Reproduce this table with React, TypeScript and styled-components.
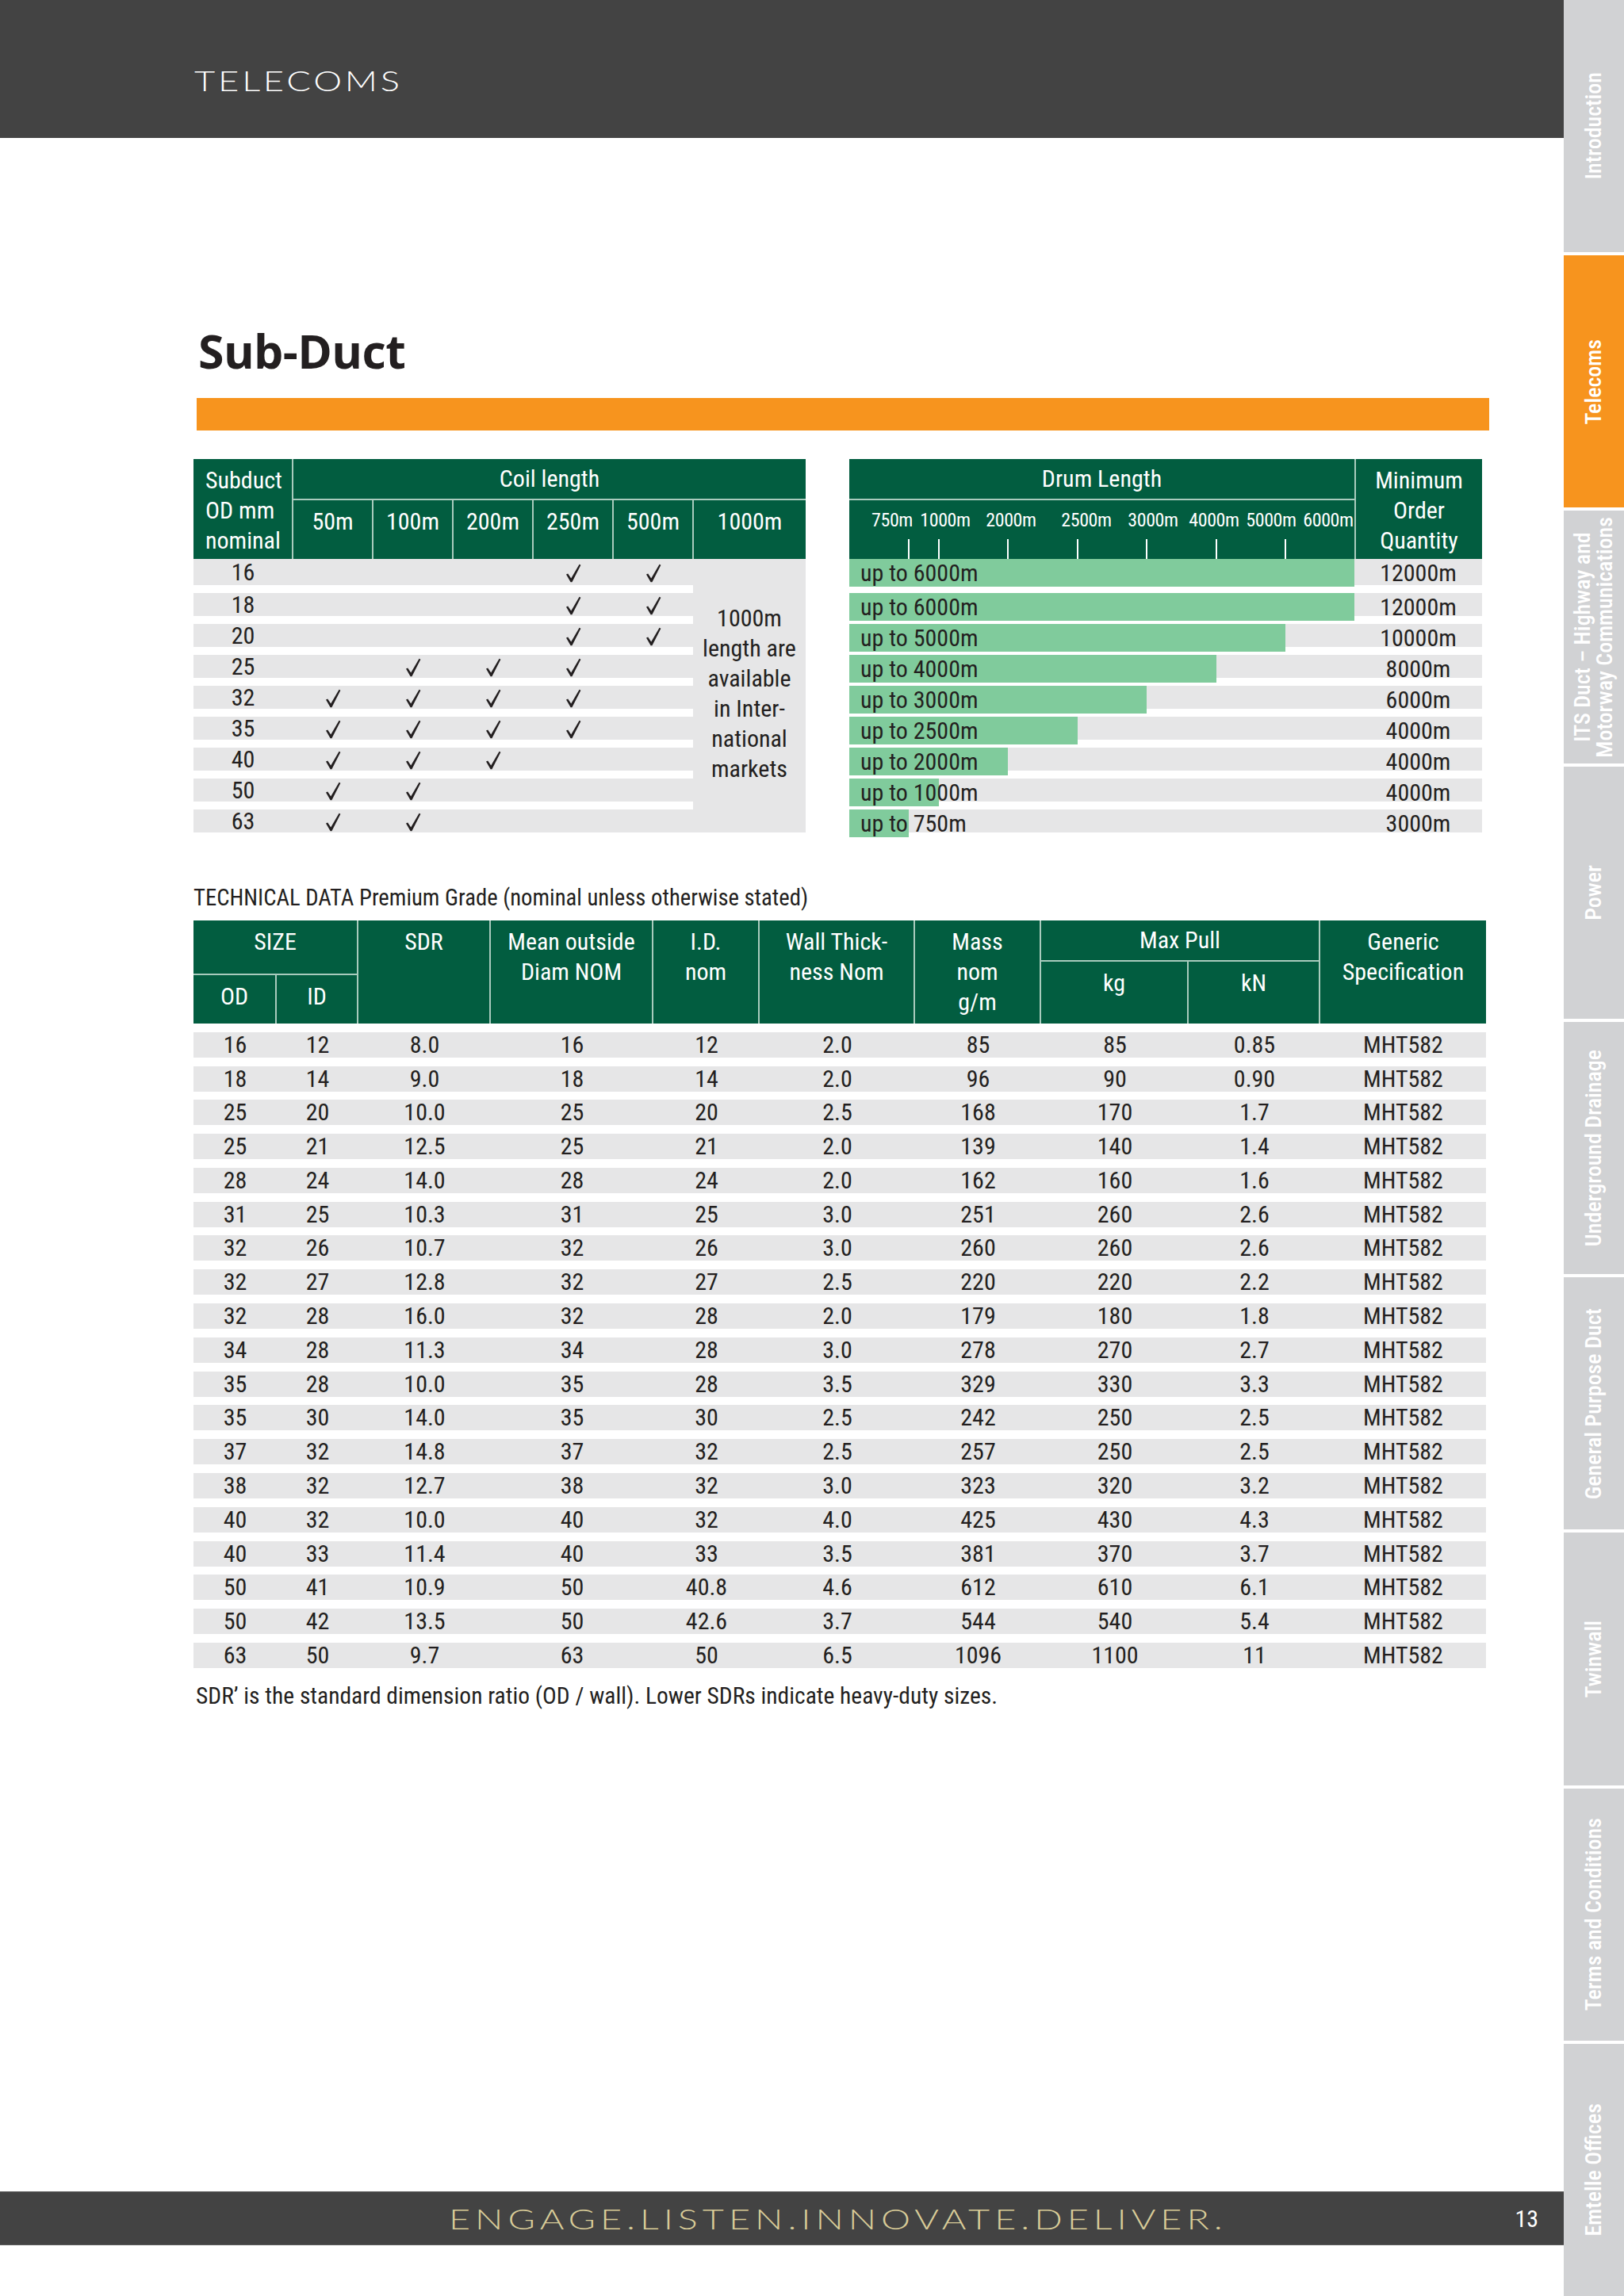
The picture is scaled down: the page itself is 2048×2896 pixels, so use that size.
import React from 'react';
import styled, { createGlobalStyle } from 'styled-components';

const COND = `"Liberation Sans Narrow", "Arial Narrow", "Roboto Condensed", Roboto, sans-serif`;
const GREEN = '#025d40';
const RULE = '#a9cbbd';
const ROW = '#e6e6e7';
const INK = '#231f20';
const ORANGE = '#f7941e';
const DARK = '#434343';

const GlobalStyle = createGlobalStyle`
  html, body {
    margin: 0;
    padding: 0;
    background: #fff;
  }
  body {
    font-family: ${COND};
    color: ${INK};
  }
`;

const Page = styled.div`
  width: 2048px;
  height: 2896px;
  display: grid;
  grid-template-columns: 1972px 76px;
  overflow: hidden;
`;

const Main = styled.div`
  display: flex;
  flex-direction: column;
  height: 2896px;
`;

const TopBar = styled.header`
  flex-shrink: 0;
  height: 174px;
  box-sizing: border-box;
  padding: 83px 0 0 245px;
  background: ${DARK};
`;

// extended display face: Lato light stretched horizontally
const Wordmark = styled.div<{ $color: string; $stretch: number; $spacing: number }>`
  font-family: Lato, "DejaVu Sans", sans-serif;
  font-weight: 300;
  font-size: 36px;
  line-height: 1;
  letter-spacing: ${({ $spacing }) => $spacing}px;
  color: ${({ $color }) => $color};
  white-space: nowrap;
  transform: scaleX(${({ $stretch }) => $stretch});
  transform-origin: left center;
`;

const Content = styled.main`
  width: 1630px;
  padding-left: 244px;
`;

const Title = styled.h1`
  margin: 239px 0 0 6px;
  font-family: "Open Sans", "Noto Sans", sans-serif;
  font-weight: 700;
  font-size: 59px;
  line-height: 1;
  letter-spacing: -0.6px;
  color: ${INK};
`;

const OrangeBar = styled.div`
  margin: 30px 0 0 4px;
  width: 1630px;
  height: 41px;
  background: ${ORANGE};
`;

const TablesRow = styled.div`
  display: flex;
  gap: 55px;
  margin-top: 36px;
`;

/* ---------- shared header cell ---------- */

const HeadGrid = styled.div<{ $cols: string; $rows: string }>`
  display: grid;
  grid-template-columns: ${({ $cols }) => $cols};
  grid-template-rows: ${({ $rows }) => $rows};
  gap: 2px;
  background: ${RULE};
`;

const HeadCell = styled.div<{ $col?: string; $row?: string; $left?: boolean; $middle?: boolean }>`
  grid-column: ${({ $col }) => $col || 'auto'};
  grid-row: ${({ $row }) => $row || 'auto'};
  background: ${GREEN};
  color: #fff;
  font-size: 30px;
  line-height: 38px;
  box-sizing: border-box;
  padding: ${({ $left, $middle }) => ($middle ? '0' : $left ? '8px 0 0 15px' : '8px 0 0')};
  display: flex;
  flex-direction: column;
  justify-content: ${({ $middle }) => ($middle ? 'center' : 'flex-start')};
  text-align: ${({ $left }) => ($left ? 'left' : 'center')};
  white-space: nowrap;
`;

/* ---------- coil length table ---------- */

const CoilTable = styled.div`
  width: 772px;
`;

const CoilBody = styled.div`
  display: grid;
  grid-template-columns: 125px 101px 101px 101px 101px 101px 1fr;
  grid-template-rows: 33px repeat(8, 29px);
  row-gap: 10px;
`;

const CoilCell = styled.div`
  background: ${ROW};
  display: flex;
  align-items: center;
  justify-content: center;
  font-size: 30px;
  line-height: 1;
`;

const TickMark = styled.svg`
  width: 20px;
  height: 24px;
  margin-top: 2px;
  fill: ${INK};
`;

function Tick() {
  return (
    <TickMark viewBox="0 0 20 24">
      <path d="M1 13.6 L3.2 12.4 L7.2 18.6 L17.6 0.8 L19.4 1.8 L8.4 23.2 L6.6 23.2 Z" />
    </TickMark>
  );
}

const MergedNote = styled.div`
  grid-column: 7;
  grid-row: 1 / span 9;
  background: ${ROW};
  display: flex;
  align-items: center;
  justify-content: center;
  text-align: center;
  font-size: 30px;
  line-height: 38px;
  padding-bottom: 6px;
`;

/* ---------- drum length table ---------- */

const DrumTable = styled.div`
  width: 798px;
`;

const Axis = styled.div`
  grid-column: 1;
  grid-row: 2;
  background: ${GREEN};
  position: relative;
`;

const AxisLabel = styled.span`
  position: absolute;
  top: 6px;
  transform: translateX(-50%);
  color: #fff;
  font-size: 24px;
  letter-spacing: -0.4px;
  line-height: 38px;
  white-space: nowrap;
`;

const AxisTick = styled.span`
  position: absolute;
  bottom: 0;
  width: 2px;
  height: 25px;
  background: #fff;
`;

const DrumBody = styled.div`
  display: flex;
  flex-direction: column;
  gap: 10px;
`;

const DrumRow = styled.div<{ $first?: boolean }>`
  display: grid;
  grid-template-columns: 637px 1fr;
  height: ${({ $first }) => ($first ? 33 : 29)}px;
  background: ${ROW};
`;

const BarTrack = styled.div`
  position: relative;
`;

const BarFill = styled.div`
  height: 100%;
  background: #80cb9c;
`;

const BarLabel = styled.span`
  position: absolute;
  left: 14px;
  top: 0;
  bottom: 0;
  display: flex;
  align-items: center;
  font-size: 30px;
  white-space: nowrap;
`;

const MinCell = styled.div`
  display: flex;
  align-items: center;
  justify-content: center;
  font-size: 30px;
`;

/* ---------- technical data ---------- */

const Caption = styled.p`
  margin: 68px 0 0 0;
  font-size: 28.7px;
  line-height: 1;
  white-space: nowrap;
`;

const TechTable = styled.div`
  margin-top: 14px;
  width: 1630px;
`;

const TechBody = styled.div`
  display: flex;
  flex-direction: column;
  gap: 10.8px;
  margin-top: 11px;
`;

const TechRow = styled.div`
  display: grid;
  grid-template-columns: 105px 103px 167px 205px 134px 196px 159px 186px 166px 209px;
  height: 32px;
  background: ${ROW};
`;

const TechCell = styled.div`
  display: flex;
  align-items: center;
  justify-content: center;
  font-size: 30px;
  line-height: 1;
`;

const Footnote = styled.p`
  margin: 21px 0 0 3px;
  font-size: 29.5px;
  line-height: 1;
  white-space: nowrap;
`;

/* ---------- footer ---------- */

const Footer = styled.footer`
  margin-top: auto;
  margin-bottom: 64px;
  height: 68px;
  flex-shrink: 0;
  box-sizing: border-box;
  background: ${DARK};
  border-top: 1px solid #5e5e5e;
  border-bottom: 1px solid #5e5e5e;
  display: flex;
  align-items: center;
  padding-left: 566px;
`;

const PageNum = styled.span`
  margin-left: auto;
  margin-right: 32px;
  color: #fff;
  font-size: 30px;
`;

/* ---------- sidebar ---------- */

const Sidebar = styled.nav`
  display: flex;
  flex-direction: column;
  gap: 4px;
  height: 2896px;
`;

const Tab = styled.div<{ $active?: boolean }>`
  flex: 1;
  background: ${({ $active }) => ($active ? ORANGE : '#d1d2d4')};
  display: flex;
  align-items: center;
  justify-content: center;
`;

const TabLabel = styled.span`
  writing-mode: vertical-rl;
  transform: rotate(180deg);
  color: #fff;
  font-weight: 500;
  font-size: 28px;
  line-height: 1;
  text-align: center;
  white-space: nowrap;
`;

/* ---------- data ---------- */

const coilSizes = ['50m', '100m', '200m', '250m', '500m'];

const coilRows: [string, string[]][] = [
  ['16', ['250m', '500m']],
  ['18', ['250m', '500m']],
  ['20', ['250m', '500m']],
  ['25', ['100m', '200m', '250m']],
  ['32', ['50m', '100m', '200m', '250m']],
  ['35', ['50m', '100m', '200m', '250m']],
  ['40', ['50m', '100m', '200m']],
  ['50', ['50m', '100m']],
  ['63', ['50m', '100m']],
];

const axisLabels: [string, number][] = [
  ['750m', 54],
  ['1000m', 121],
  ['2000m', 204],
  ['2500m', 299],
  ['3000m', 383],
  ['4000m', 460],
  ['5000m', 532],
  ['6000m', 604],
];

const axisTicks = [75, 113, 200, 288, 375, 463, 550];

const drumRows: [string, number, string][] = [
  ['6000m', 637, '12000m'],
  ['6000m', 637, '12000m'],
  ['5000m', 550, '10000m'],
  ['4000m', 463, '8000m'],
  ['3000m', 375, '6000m'],
  ['2500m', 288, '4000m'],
  ['2000m', 200, '4000m'],
  ['1000m', 113, '4000m'],
  ['750m', 75, '3000m'],
];

const techRows = [
  ['16', '12', '8.0', '16', '12', '2.0', '85', '85', '0.85'],
  ['18', '14', '9.0', '18', '14', '2.0', '96', '90', '0.90'],
  ['25', '20', '10.0', '25', '20', '2.5', '168', '170', '1.7'],
  ['25', '21', '12.5', '25', '21', '2.0', '139', '140', '1.4'],
  ['28', '24', '14.0', '28', '24', '2.0', '162', '160', '1.6'],
  ['31', '25', '10.3', '31', '25', '3.0', '251', '260', '2.6'],
  ['32', '26', '10.7', '32', '26', '3.0', '260', '260', '2.6'],
  ['32', '27', '12.8', '32', '27', '2.5', '220', '220', '2.2'],
  ['32', '28', '16.0', '32', '28', '2.0', '179', '180', '1.8'],
  ['34', '28', '11.3', '34', '28', '3.0', '278', '270', '2.7'],
  ['35', '28', '10.0', '35', '28', '3.5', '329', '330', '3.3'],
  ['35', '30', '14.0', '35', '30', '2.5', '242', '250', '2.5'],
  ['37', '32', '14.8', '37', '32', '2.5', '257', '250', '2.5'],
  ['38', '32', '12.7', '38', '32', '3.0', '323', '320', '3.2'],
  ['40', '32', '10.0', '40', '32', '4.0', '425', '430', '4.3'],
  ['40', '33', '11.4', '40', '33', '3.5', '381', '370', '3.7'],
  ['50', '41', '10.9', '50', '40.8', '4.6', '612', '610', '6.1'],
  ['50', '42', '13.5', '50', '42.6', '3.7', '544', '540', '5.4'],
  ['63', '50', '9.7', '63', '50', '6.5', '1096', '1100', '11'],
];

const tabs: { label: React.ReactNode; active?: boolean }[] = [
  { label: 'Introduction' },
  { label: 'Telecoms', active: true },
  { label: <>ITS Duct – Highway and<br />Motorway Communications</> },
  { label: 'Power' },
  { label: 'Underground Drainage' },
  { label: 'General Purpose Duct' },
  { label: 'Twinwall' },
  { label: 'Terms and Conditions' },
  { label: 'Emtelle Offices' },
];

export default function App() {
  return (
    <>
      <GlobalStyle />
      <Page>
        <Main>
          <TopBar>
            <Wordmark $color="#fff" $stretch={1.26} $spacing={3}>TELECOMS</Wordmark>
          </TopBar>

          <Content>
            <Title>Sub-Duct</Title>
            <OrangeBar />

            <TablesRow>
              <CoilTable>
                <HeadGrid $cols="124px 99px 99px 99px 99px 99px 1fr" $rows="50px 74px">
                  <HeadCell $col="1" $row="1 / 3" $left>
                    <span>Subduct</span>
                    <span>OD mm</span>
                    <span>nominal</span>
                  </HeadCell>
                  <HeadCell $col="2 / 8" $row="1" $middle>Coil length</HeadCell>
                  {coilSizes.map((s) => (
                    <HeadCell key={s} $row="2">{s}</HeadCell>
                  ))}
                  <HeadCell $row="2">1000m</HeadCell>
                </HeadGrid>
                <CoilBody>
                  <MergedNote>
                    1000m<br />length are<br />available<br />in Inter-<br />national<br />markets
                  </MergedNote>
                  {coilRows.map(([od, avail]) => (
                    <React.Fragment key={od}>
                      <CoilCell>{od}</CoilCell>
                      {coilSizes.map((s) => (
                        <CoilCell key={s}>{avail.includes(s) && <Tick />}</CoilCell>
                      ))}
                    </React.Fragment>
                  ))}
                </CoilBody>
              </CoilTable>

              <DrumTable>
                <HeadGrid $cols="637px 1fr" $rows="50px 74px">
                  <HeadCell $col="1" $row="1" $middle>Drum Length</HeadCell>
                  <Axis>
                    {axisLabels.map(([t, x]) => (
                      <AxisLabel key={t} style={{ left: x }}>{t}</AxisLabel>
                    ))}
                    {axisTicks.map((x) => (
                      <AxisTick key={x} style={{ left: x - 1 }} />
                    ))}
                  </Axis>
                  <HeadCell $col="2" $row="1 / 3">
                    <span>Minimum</span>
                    <span>Order</span>
                    <span>Quantity</span>
                  </HeadCell>
                </HeadGrid>
                <DrumBody>
                  {drumRows.map(([len, w, min], i) => (
                    <DrumRow key={i} $first={i === 0}>
                      <BarTrack>
                        <BarFill style={{ width: w }} />
                        <BarLabel>up to {len}</BarLabel>
                      </BarTrack>
                      <MinCell>{min}</MinCell>
                    </DrumRow>
                  ))}
                </DrumBody>
              </DrumTable>
            </TablesRow>

            <Caption>TECHNICAL DATA Premium Grade (nominal unless otherwise stated)</Caption>

            <TechTable>
              <HeadGrid
                $cols="103px 101px 165px 203px 132px 194px 157px 184px 164px 1fr"
                $rows="50px 15px 61px"
              >
                <HeadCell $col="1 / 3" $row="1 / 3">SIZE</HeadCell>
                <HeadCell $col="1" $row="3">OD</HeadCell>
                <HeadCell $col="2" $row="3">ID</HeadCell>
                <HeadCell $col="3" $row="1 / 4">SDR</HeadCell>
                <HeadCell $col="4" $row="1 / 4">
                  <span>Mean outside</span>
                  <span>Diam NOM</span>
                </HeadCell>
                <HeadCell $col="5" $row="1 / 4">
                  <span>I.D.</span>
                  <span>nom</span>
                </HeadCell>
                <HeadCell $col="6" $row="1 / 4">
                  <span>Wall Thick-</span>
                  <span>ness Nom</span>
                </HeadCell>
                <HeadCell $col="7" $row="1 / 4">
                  <span>Mass</span>
                  <span>nom</span>
                  <span>g/m</span>
                </HeadCell>
                <HeadCell $col="8 / 10" $row="1" $middle>Max Pull</HeadCell>
                <HeadCell $col="8" $row="2 / 4">kg</HeadCell>
                <HeadCell $col="9" $row="2 / 4">kN</HeadCell>
                <HeadCell $col="10" $row="1 / 4">
                  <span>Generic</span>
                  <span>Specification</span>
                </HeadCell>
              </HeadGrid>
              <TechBody>
                {techRows.map((r, i) => (
                  <TechRow key={i}>
                    {r.map((v, j) => (
                      <TechCell key={j}>{v}</TechCell>
                    ))}
                    <TechCell>MHT582</TechCell>
                  </TechRow>
                ))}
              </TechBody>
            </TechTable>

            <Footnote>
              SDR’ is the standard dimension ratio (OD / wall). Lower SDRs indicate heavy-duty sizes.
            </Footnote>
          </Content>

          <Footer>
            <Wordmark $color="#d9cc98" $stretch={1.3} $spacing={4.6}>
              ENGAGE.LISTEN.INNOVATE.DELIVER.
            </Wordmark>
            <PageNum>13</PageNum>
          </Footer>
        </Main>

        <Sidebar>
          {tabs.map((t, i) => (
            <Tab key={i} $active={t.active}>
              <TabLabel>{t.label}</TabLabel>
            </Tab>
          ))}
        </Sidebar>
      </Page>
    </>
  );
}
